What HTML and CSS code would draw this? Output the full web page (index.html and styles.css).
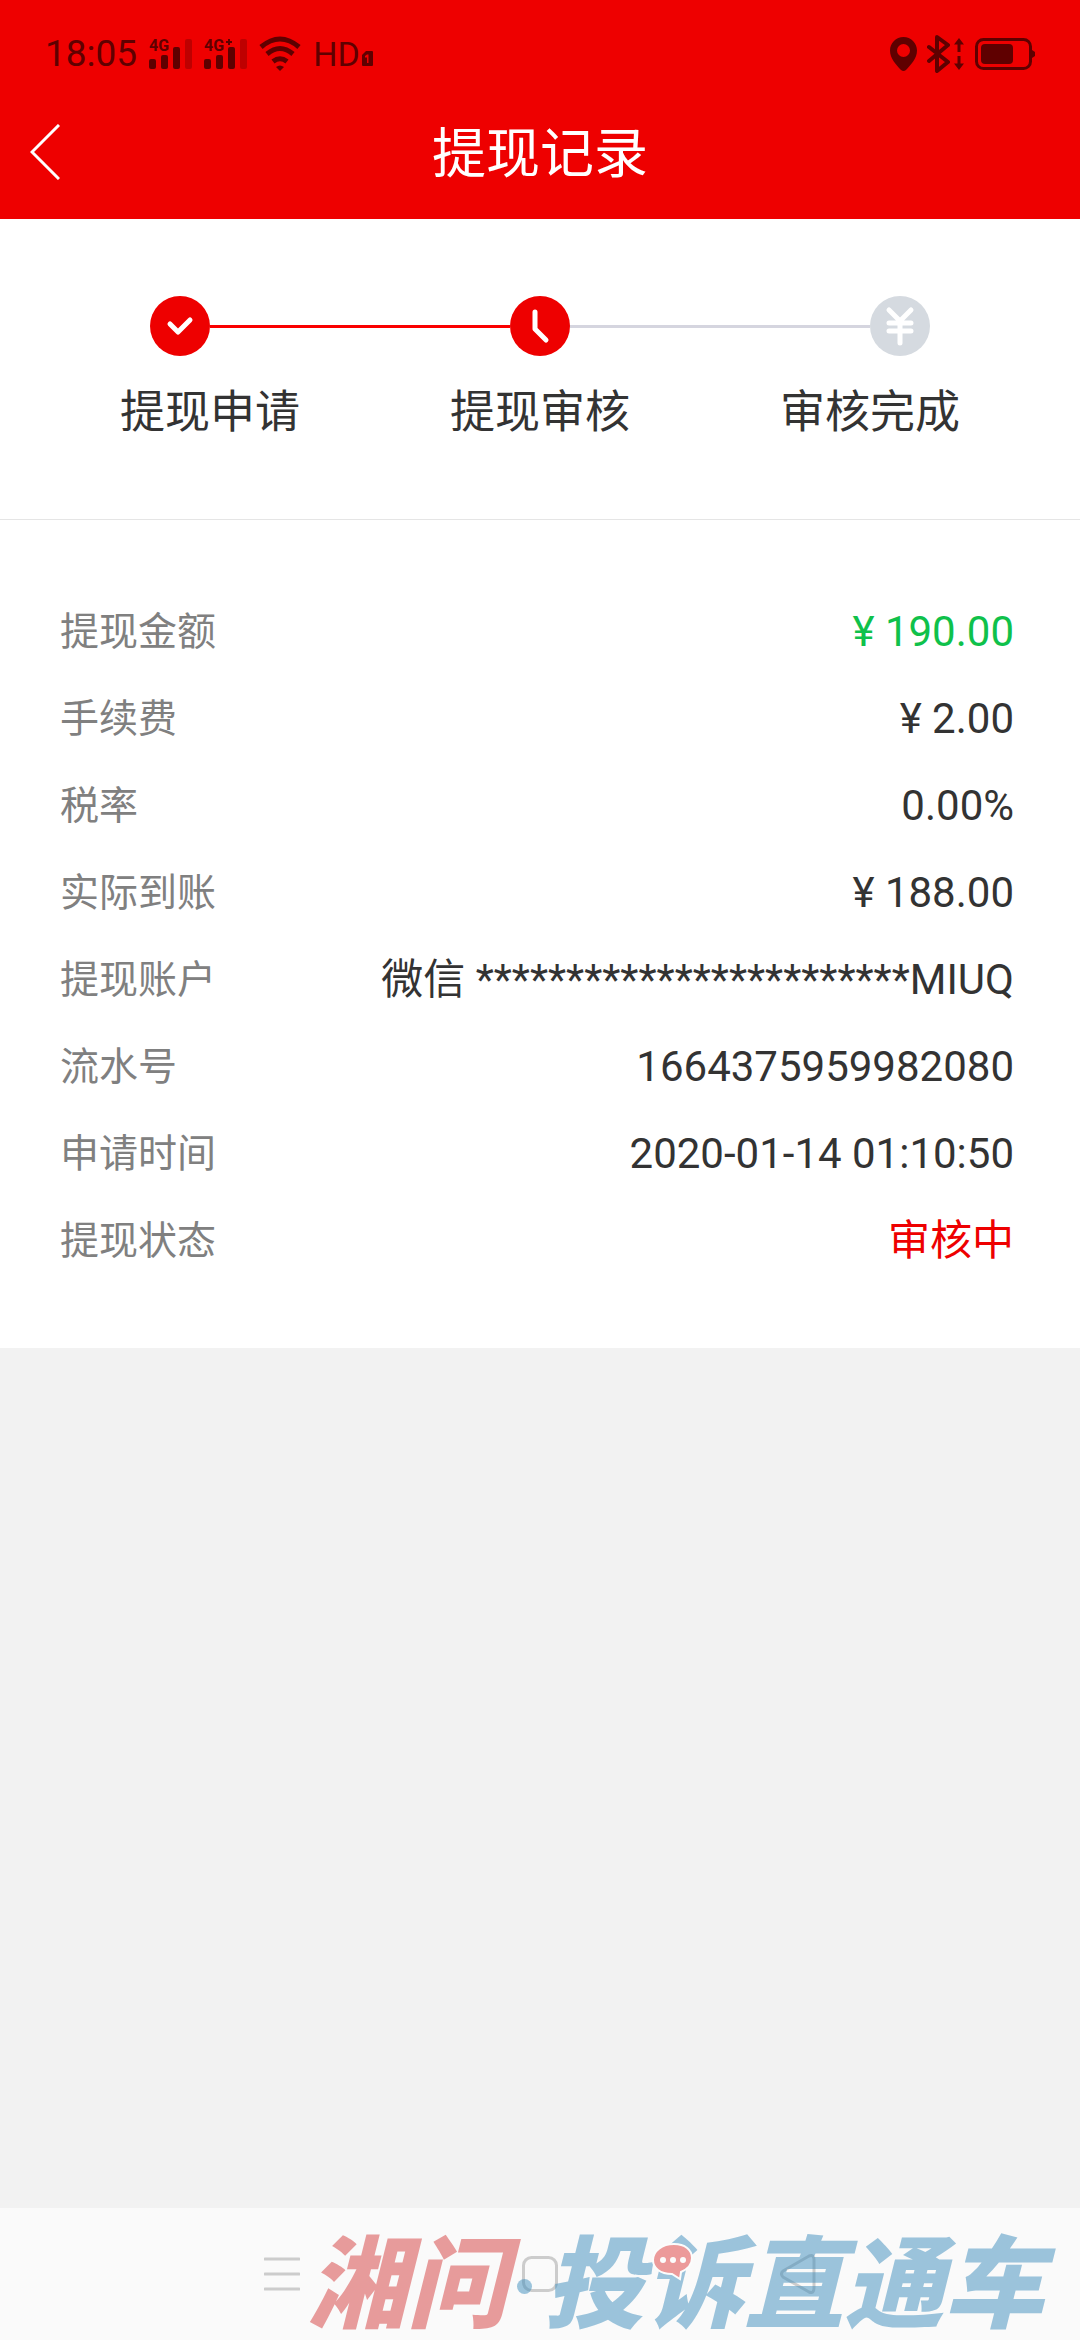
FILE: index.html
```
<!DOCTYPE html>
<html lang="zh-CN">
<head>
    <meta charset="UTF-8" />
    <meta name="viewport" content="width=device-width, initial-scale=1.0" />
    <title>提现记录</title>
    <link rel="stylesheet" href="styles.css">
</head>

<body>
<header class="header">
    <div class="status">
        <span class="status-text">18:05</span>
        <svg class="signal" width="43" height="38" viewBox="0 0 43 38">
            <text x="0" y="16">4G</text>
            <rect x="0" y="24" width="7" height="10" rx="2"/>
            <rect x="12" y="20" width="7" height="14" rx="2"/>
            <rect x="24" y="12" width="7" height="22" rx="2"/>
            <rect class="off" x="36" y="4" width="7" height="30" rx="2"/>
        </svg>
        <svg class="signal" width="43" height="38" viewBox="0 0 43 38">
            <text x="0" y="16">4G</text>
            <path d="M24 4h2v2h2v2h-2v2h-2v-2h-2V6h2z"/>
            <rect x="0" y="24" width="7" height="10" rx="2"/>
            <rect x="12" y="20" width="7" height="14" rx="2"/>
            <rect x="24" y="12" width="7" height="22" rx="2"/>
            <rect class="off" x="36" y="4" width="7" height="30" rx="2"/>
        </svg>
        <svg class="wifi" width="42" height="38" viewBox="0 0 42 38">
            <path d="M2 12Q21 -4 40 12M8 19Q21 8 34 19M14 26.500Q21 21 28 26.500"/>
            <path class="solid" d="M17 32q4-3 8 0l-4 4z"/>
        </svg>
        <span class="hd">
            <span class="hd-text">HD</span>
            <svg width="11" height="15" viewBox="0 0 11 15">
                <path fill-rule="evenodd" d="M4 0h6q1 0 1 1v13q0 1-1 1H1q-1 0-1-1V4zM3 5v1.500h2V12h1.500V3.500H5z"/>
            </svg>
        </span>
        <span class="status-right">
            <svg width="27" height="38" viewBox="0 0 27 38">
                <path fill-rule="evenodd" d="M13.500 2C6 2 0 8 0 15.500c0 8 6 14 11 19.500q2.500 2 5 0c5-5.500 11-11.500 11-19.500C27 8 21 2 13.500 2zm0 7a6.500 6.500 0 1 1 0 13 6.500 6.500 0 0 1 0-13z"/>
            </svg>
            <svg class="bluetooth" width="38" height="38" viewBox="0 0 38 38">
                <path d="M2 12l19 15-11 9V2l11 8L2 26"/>
                <path class="solid" d="M32 3l5 6.500h-3.500V17h-3V9.500H27zM32 35l5-6.500h-3.500V21h-3v7.500H27z"/>
            </svg>
            <svg width="60" height="38" viewBox="0 0 60 38">
                <rect class="case" x="1.500" y="4.500" width="54" height="29" rx="7"/>
                <rect x="6" y="9" width="32" height="20" rx="4"/>
                <path d="M57 15l3 2v4l-3 2z"/>
            </svg>
        </span>
    </div>
    <div class="titlebar">
        <button class="back" type="button" aria-label="返回">
            <svg width="30" height="56" viewBox="0 0 30 56"><path d="M29 1L2 28l27 27"/></svg>
        </button>
        <h1>提现记录</h1>
    </div>
</header>

<main>
    <section class="steps">
        <div class="track">
            <svg class="done" width="60" height="60" viewBox="0 0 60 60">
                <circle cx="30" cy="30" r="30"/>
                <path stroke-width="6" d="M20 28l8 8 12-12"/>
            </svg>
            <span class="line line-done"></span>
            <svg class="done" width="60" height="60" viewBox="0 0 60 60">
                <circle cx="30" cy="30" r="30"/>
                <path d="M25 16v17l11 11"/>
            </svg>
            <span class="line"></span>
            <svg class="todo" width="60" height="60" viewBox="0 0 60 60">
                <circle cx="30" cy="30" r="30"/>
                <path d="M19 14l11 11 11-11M30 25v22M19 27h22M19 35h22"/>
            </svg>
        </div>
        <div class="step-names">
            <span>提现申请</span>
            <span>提现审核</span>
            <span>审核完成</span>
        </div>
    </section>

    <dl class="detail">
        <div class="row"><dt>提现金额</dt><dd class="green">¥ 190.00</dd></div>
        <div class="row"><dt>手续费</dt><dd>¥ 2.00</dd></div>
        <div class="row"><dt>税率</dt><dd>0.00%</dd></div>
        <div class="row"><dt>实际到账</dt><dd>¥ 188.00</dd></div>
        <div class="row"><dt>提现账户</dt><dd>微信 ************************MIUQ</dd></div>
        <div class="row"><dt>流水号</dt><dd>1664375959982080</dd></div>
        <div class="row"><dt>申请时间</dt><dd>2020-01-14 01:10:50</dd></div>
        <div class="row"><dt>提现状态</dt><dd class="red">审核中</dd></div>
    </dl>
</main>

<nav class="navbar">
    <button type="button" aria-label="菜单">
        <svg width="36" height="40" viewBox="0 0 36 40"><path d="M1 5h34M1 20h34M1 35h34"/></svg>
    </button>
    <button type="button" aria-label="主页">
        <svg width="36" height="40" viewBox="0 0 36 40"><rect x="1.500" y="3.500" width="33" height="33" rx="8"/></svg>
    </button>
    <button type="button" aria-label="后退">
        <svg width="36" height="40" viewBox="0 0 36 40"><path d="M3 17L29 2q5-2 5 4v28q0 6-5 4L3 23q-3-3 0-6z"/></svg>
    </button>
    <div class="watermark">
        <span class="mark-red">湘问</span>
        <i class="dot"></i>
        <span class="mark-blue">投诉直通车
            <svg class="bubble" width="44" height="40" viewBox="0 0 44 40">
                <path class="edge" d="M24 2C12 2 3 9 3 18c0 8 7 14 19 14l8 5 1-7c7-3 11-8 11-14C42 8 35 2 24 2z"/>
                <circle cx="13" cy="18" r="3"/><circle cx="23" cy="18" r="3"/><circle cx="33" cy="18" r="3"/>
            </svg>
        </span>
    </div>
</nav>
</body>
</html>
```

FILE: styles.css
```
* {
    box-sizing: border-box;
    margin: 0;
    padding: 0;
}
body {
    display: flex;
    flex-direction: column;
    min-height: 100vh;
    background: #f2f2f2;
    color: #333;
    font-family: Roboto, "Noto Sans CJK SC", sans-serif;
}
button {
    border: 0;
    background: none;
    cursor: pointer;
}
svg {
    display: block;
    flex: none;
}
main {
    flex: 1;
}

/* header */
.header {
    background: #ee0000;
}
.status {
    display: flex;
    align-items: center;
    gap: 12px;
    height: 85px;
    padding: 23px 45px 0;
    color: #5f0000;
    fill: #5f0000;
}
.status-text {
    font-size: 37px;
    line-height: 40px;
}
.hd-text {
    font-size: 34px;
    line-height: 40px;
}
.signal text {
    font-size: 16px;
    font-weight: 700;
}
.signal .off {
    fill: #be0000;
}
.wifi,
.bluetooth {
    fill: none;
    stroke: #5f0000;
    stroke-width: 5;
}
.bluetooth {
    stroke-width: 4;
    stroke-linejoin: round;
    stroke-linecap: round;
}
.solid {
    fill: #5f0000;
    stroke: none;
}
.hd {
    display: flex;
    align-items: flex-end;
}
.hd svg {
    margin: 0 0 8px 2px;
}
.status-right {
    display: flex;
    gap: 10px;
    margin-left: auto;
}
.case {
    fill: none;
    stroke: #5f0000;
    stroke-width: 3;
}
.titlebar {
    display: grid;
    grid-template-columns: 90px 1fr 90px;
    align-items: center;
    height: 134px;
    color: #fff;
}
.back {
    padding-left: 30px;
}
.back svg {
    fill: none;
    stroke: #fff;
    stroke-width: 3;
}
.titlebar h1 {
    padding-top: 6px;
    font-size: 54px;
    font-weight: 400;
    line-height: 80px;
    text-align: center;
}

/* steps */
.steps {
    padding: 77px 120px 76px;
    border-bottom: 1px solid #e5e5e5;
    background: #fff;
}
.track {
    display: flex;
    align-items: center;
    padding: 0 30px;
}
.track path {
    fill: none;
    stroke: #fff;
    stroke-width: 5;
    stroke-linecap: round;
    stroke-linejoin: round;
}
.done {
    fill: #ee0000;
}
.todo {
    fill: #d5dae0;
}
.line {
    flex: 1;
    height: 3px;
    background: #d5d5df;
}
.line-done {
    background: #fa0000;
}
.step-names {
    display: flex;
    justify-content: space-between;
    margin-top: 27px;
    font-size: 45px;
    line-height: 60px;
}

/* detail */
.detail {
    padding: 68px 66px 64px 60px;
    background: #fff;
}
.row {
    display: flex;
    justify-content: space-between;
    align-items: center;
    height: 87px;
    line-height: 60px;
}
.row dt {
    color: #808080;
    font-size: 39px;
}
.row dd {
    font-size: 42px;
}
.row .green {
    color: #0fc14b;
}
.row .red {
    color: #ee0000;
}

/* bottom bar */
.navbar {
    position: relative;
    display: flex;
    justify-content: center;
    align-items: center;
    gap: 222px;
    height: 132px;
    background: #fafafa;
}
.navbar button svg {
    fill: none;
    stroke: #ccc;
    stroke-width: 3;
    stroke-linecap: round;
}
.watermark {
    position: absolute;
    right: 36px;
    bottom: 0;
    display: flex;
    align-items: center;
    height: 108px;
    font-size: 100px;
    font-style: italic;
    font-weight: 900;
    line-height: 108px;
    white-space: nowrap;
    opacity: .5;
    pointer-events: none;
}
.mark-red {
    color: #d63e3e;
}
.mark-blue {
    position: relative;
    color: #3e8ebe;
}
.dot {
    width: 15px;
    height: 15px;
    margin: 0 12px 0 10px;
    border-radius: 50%;
    background: #3e8ebe;
}
.bubble {
    position: absolute;
    left: 106px;
    top: 10px;
    fill: #fff;
}
.bubble .edge {
    fill: #e03c3c;
    stroke: #fff;
    stroke-width: 2;
}
```
